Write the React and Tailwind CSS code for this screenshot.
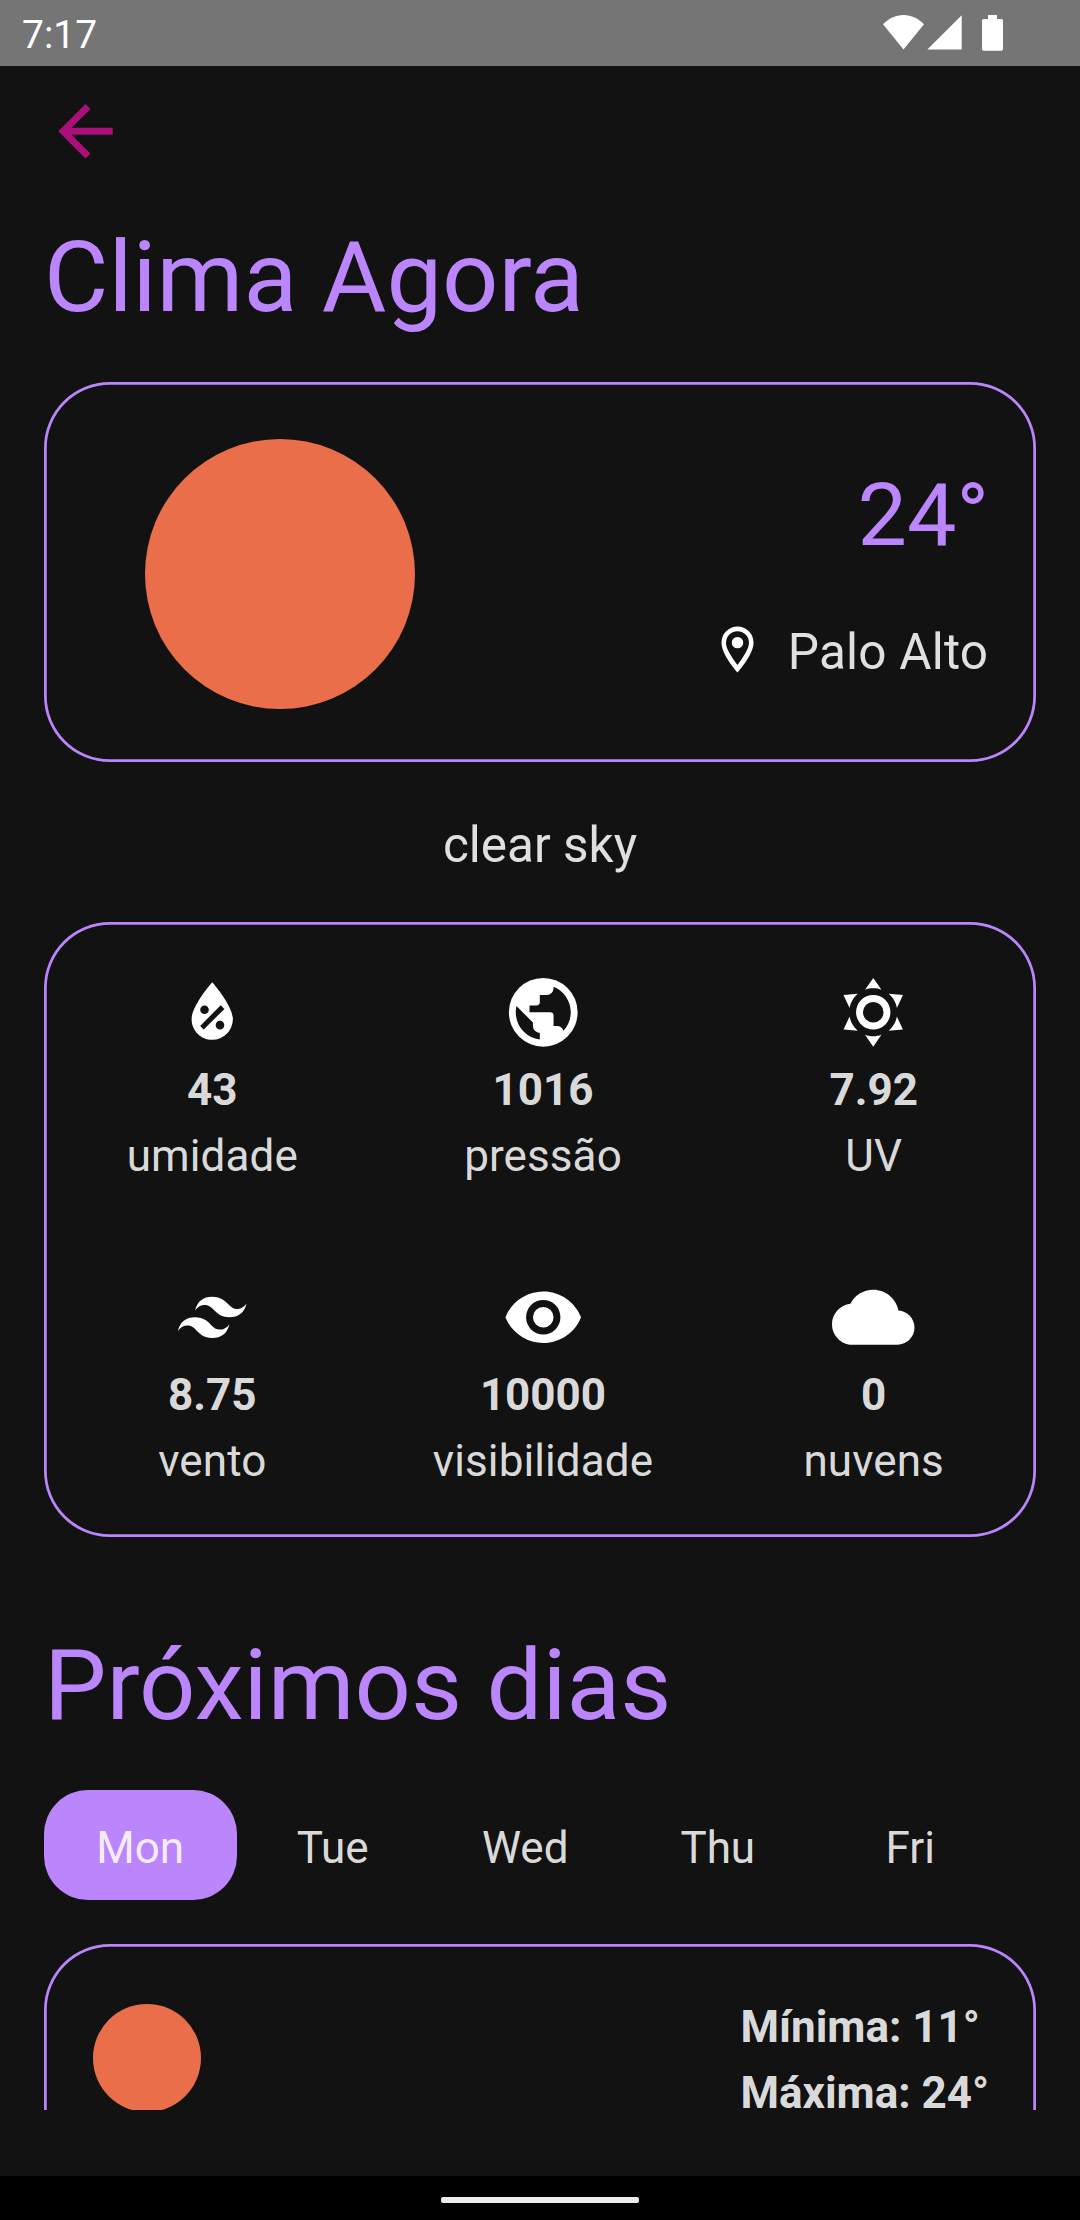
import React from "react";

const ICONS = {
  arrow:
    "M20,11V13H8L13.5,18.5L12.08,19.92L4.16,12L12.08,4.08L13.5,5.5L8,11H20Z",
  pin: "M12,6.5A2.5,2.5 0 0,1 14.5,9A2.5,2.5 0 0,1 12,11.5A2.5,2.5 0 0,1 9.5,9A2.5,2.5 0 0,1 12,6.5M12,2A7,7 0 0,1 19,9C19,14.25 12,22 12,22C12,22 5,14.25 5,9A7,7 0 0,1 12,2M12,4A5,5 0 0,0 7,9C7,10 7,12 12,18.71C17,12 17,10 17,9A5,5 0 0,0 12,4Z",
  humidity:
    "M12,3.25C12,3.25 6,10 6,14C6,17.32 8.69,20 12,20A6,6 0 0,0 18,14C18,10 12,3.25 12,3.25M14.47,9.97L15.53,11.03L9.53,17.03L8.47,15.97M9.75,10A1.25,1.25 0 0,1 11,11.25A1.25,1.25 0 0,1 9.75,12.5A1.25,1.25 0 0,1 8.5,11.25A1.25,1.25 0 0,1 9.75,10M14.25,14.5A1.25,1.25 0 0,1 15.5,15.75A1.25,1.25 0 0,1 14.25,17A1.25,1.25 0 0,1 13,15.75A1.25,1.25 0 0,1 14.25,14.5Z",
  globe:
    "M17.9,17.39C17.64,16.59 16.89,16 16,16H15V13A1,1 0 0,0 14,12H8V10H10A1,1 0 0,0 11,9V7H13A2,2 0 0,0 15,5V4.59C17.93,5.77 20,8.64 20,12C20,14.08 19.2,15.97 17.9,17.39M11,19.93C7.05,19.44 4,16.08 4,12C4,11.38 4.08,10.78 4.21,10.21L9,15V16A2,2 0 0,0 11,18M12,2A10,10 0 0,0 2,12A10,10 0 0,0 12,22A10,10 0 0,0 22,12A10,10 0 0,0 12,2Z",
  sun: "M12,7A5,5 0 0,1 17,12A5,5 0 0,1 12,17A5,5 0 0,1 7,12A5,5 0 0,1 12,7M12,9A3,3 0 0,0 9,12A3,3 0 0,0 12,15A3,3 0 0,0 15,12A3,3 0 0,0 12,9M12,2L14.39,5.42C13.65,5.15 12.84,5 12,5C11.16,5 10.35,5.15 9.61,5.42L12,2M3.34,7L7.5,6.65C6.9,7.16 6.36,7.78 5.94,8.5C5.5,9.24 5.25,10 5.11,10.79L3.34,7M3.36,17L5.12,13.23C5.26,14 5.53,14.78 5.95,15.5C6.37,16.24 6.91,16.86 7.5,17.37L3.36,17M20.65,7L18.88,10.79C18.74,10 18.47,9.23 18.05,8.5C17.63,7.78 17.1,7.15 16.5,6.64L20.65,7M20.64,17L16.5,17.36C17.09,16.85 17.62,16.22 18.04,15.5C18.46,14.77 18.73,14 18.87,13.21L20.64,17M12,22L9.59,18.56C10.33,18.83 11.14,19 12,19C12.82,19 13.63,18.83 14.37,18.56L12,22Z",
  wind: "M12,6C9.33,6 7.67,7.33 7,10C8,8.67 9.17,8.17 10.5,8.5C11.26,8.69 11.81,9.24 12.41,9.85C13.39,10.85 14.5,12 17,12C19.67,12 21.33,10.67 22,8C21,9.33 19.83,9.83 18.5,9.5C17.74,9.31 17.2,8.76 16.59,8.15C15.61,7.15 14.5,6 12,6M7,12C4.33,12 2.67,13.33 2,16C3,14.67 4.17,14.17 5.5,14.5C6.26,14.69 6.8,15.24 7.41,15.85C8.39,16.85 9.5,18 12,18C14.67,18 16.33,16.67 17,14C16,15.33 14.83,15.83 13.5,15.5C12.74,15.31 12.19,14.76 11.59,14.15C10.61,13.15 9.5,12 7,12Z",
  eye: "M12,9A3,3 0 0,0 9,12A3,3 0 0,0 12,15A3,3 0 0,0 15,12A3,3 0 0,0 12,9M12,17A5,5 0 0,1 7,12A5,5 0 0,1 12,7A5,5 0 0,1 17,12A5,5 0 0,1 12,17M12,4.5C7,4.5 2.73,7.61 1,12C2.73,16.39 7,19.5 12,19.5C17,19.5 21.27,16.39 23,12C21.27,7.61 17,4.5 12,4.5Z",
  cloud:
    "M19.35 10.04C18.67 6.59 15.64 4 12 4 9.11 4 6.6 5.64 5.35 8.04 2.34 8.36 0 10.91 0 14c0 3.31 2.69 6 6 6h13c2.76 0 5-2.24 5-5 0-2.64-2.05-4.78-4.65-4.96z",
};

const STATS = [
  { icon: "humidity", value: "43", label: "umidade" },
  { icon: "globe", value: "1016", label: "pressão" },
  { icon: "sun", value: "7.92", label: "UV" },
  { icon: "wind", value: "8.75", label: "vento" },
  { icon: "eye", value: "10000", label: "visibilidade" },
  { icon: "cloud", value: "0", label: "nuvens" },
];

const DAYS = ["Mon", "Tue", "Wed", "Thu", "Fri"];

function Icon({ name, className }) {
  return (
    <svg viewBox="0 0 24 24" fill="currentColor" fillRule="evenodd" className={className}>
      <path d={ICONS[name]} />
    </svg>
  );
}

function Card({ className, children }) {
  return (
    <section className={`rounded-[66px] shadow-[inset_0_0_0_2.75px_#bb86fc] ${className}`}>
      {children}
    </section>
  );
}

function StatusBar() {
  return (
    <div className="flex h-[66px] shrink-0 items-start bg-[#757575] text-white">
      <span className="ml-[22px] mt-2 text-[39px] leading-[54px]">7:17</span>
      <svg viewBox="0 0 41 35" className="ml-auto mt-[15px] h-[35px] w-[41px]" fill="currentColor">
        <path d="M20.5 34.4L0 9.2C5.6 3.6 12.5 0 20.5 0S35.4 3.6 41 9.2Z" />
      </svg>
      <svg viewBox="0 0 35 35" className="ml-[3px] mt-[15px] h-[35px] w-[35px]" fill="currentColor">
        <path d="M34.7 .3V34.6H.4Z" />
      </svg>
      <svg viewBox="0 0 21 36" className="ml-5 mr-[77px] mt-[15px] h-9 w-[21px]" fill="currentColor">
        <path d="M6 0H15V4H19.5Q21 4 21 5.5V34Q21 35.7 19.3 35.7H1.7Q0 35.7 0 34V5.5Q0 4 1.5 4H6Z" />
      </svg>
    </div>
  );
}

function Stat({ icon, value, label }) {
  return (
    <div className="flex flex-col items-center">
      <Icon name={icon} className="h-[82.5px] w-[82.5px] text-white" />
      <span className="mt-1 text-[44px] leading-[66px] font-bold">{value}</span>
      <span className="text-[44px] leading-[66px] tracking-[0.1px]">{label}</span>
    </div>
  );
}

export default function App() {
  return (
    <div className="flex h-[2220px] w-[1080px] flex-col overflow-hidden bg-[#121212] font-['Roboto',sans-serif] text-white/87">
      <StatusBar />
      <main className="h-[2110px] shrink-0 px-11 pt-6">
        <Icon name="arrow" className="h-[82.5px] w-[82.5px] text-[#aa0f7a]" />
        <h1 className="mt-[38.5px] text-[99px] leading-[132px] text-[#bb86fc]">Clima Agora</h1>

        <Card className="mt-[39px] flex h-[380px] justify-between pl-[100px] pr-[46.75px]">
          <div className="ml-[0.5px] mt-[56.5px] h-[270.5px] w-[270.5px] rounded-full bg-[#eb6e4b]" />
          <div className="flex flex-col items-end">
            <span className="mt-[73px] text-[88px] leading-[120px] text-[#bb86fc]">24°</span>
            <div className="mt-[41px] flex items-start">
              <Icon name="pin" className="mr-[23px] mt-[5.5px] h-[55px] w-[55px] text-white" />
              <span className="mr-[1px] text-[49.5px] leading-[72px] tracking-[0.2px]">Palo Alto</span>
            </div>
          </div>
        </Card>

        <p className="mt-[47px] text-center text-[49.5px] leading-[72px]">clear sky</p>

        <Card className="mt-[41px] h-[615px] pl-[3px] pt-[48.5px]">
          <div className="grid w-[992px] grid-cols-3 gap-y-[86.5px]">
            {STATS.map((s) => (
              <Stat key={s.label} {...s} />
            ))}
          </div>
        </Card>

        <h2 className="mt-[82px] text-[99px] leading-[132px] text-[#bb86fc]">Próximos dias</h2>

        <div className="mt-[39px] flex">
          {DAYS.map((day, i) => (
            <div
              key={day}
              className={`flex h-[110px] w-[192.5px] items-center justify-center rounded-[44px] pt-[6px] text-[44px] leading-[66px] ${
                i === 0 ? "bg-[#bb86fc]" : ""
              }`}
            >
              {day}
            </div>
          ))}
        </div>

        <div className="mt-11 h-[166px] overflow-hidden">
          <Card className="flex h-[260px] justify-between pl-12 pr-[46.75px]">
            <div className="ml-[0.5px] mt-[59.5px] h-[108px] w-[108px] rounded-full bg-[#eb6e4b]" />
            <div className="flex flex-col pt-[50px] text-[44px] leading-[66px] font-bold">
              <span>Mínima: 11°</span>
              <span>Máxima: 24°</span>
            </div>
          </Card>
        </div>
      </main>
      <div className="flex h-11 shrink-0 items-start justify-center bg-black pt-[21px]">
        <div className="h-[6px] w-[198px] rounded-[2px] bg-[#ececec]" />
      </div>
    </div>
  );
}
